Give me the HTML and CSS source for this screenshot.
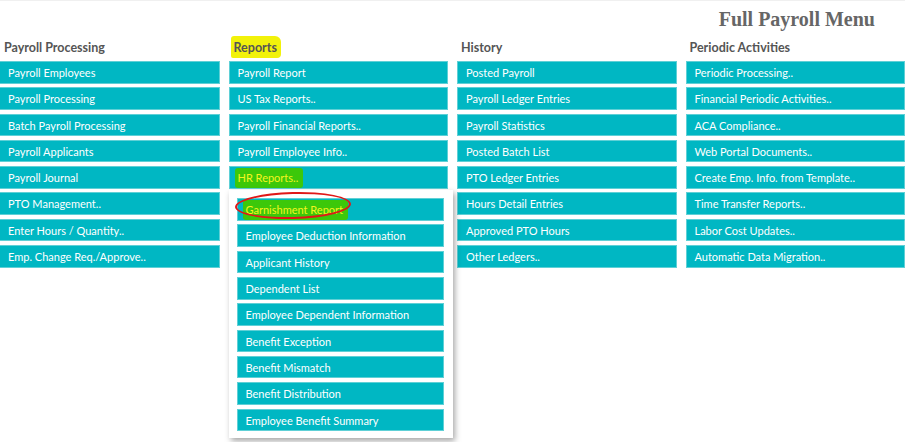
FILE: index.html
```html
<!DOCTYPE html>
<html lang="en">
<head>
    <meta charset="UTF-8">
    <meta name="viewport" content="width=device-width, initial-scale=1.0">
    <title>Full Payroll Menu</title>
    <link rel="stylesheet" href="styles.css">
</head>
<body>
    <div class="page-title">Full Payroll Menu</div>

    <div class="menu-grid">
        <div class="menu-group">
            <h2>Payroll Processing</h2>
            <div class="tile">Payroll Employees</div>
            <div class="tile">Payroll Processing</div>
            <div class="tile">Batch Payroll Processing</div>
            <div class="tile">Payroll Applicants</div>
            <div class="tile">Payroll Journal</div>
            <div class="tile">PTO Management..</div>
            <div class="tile">Enter Hours / Quantity..</div>
            <div class="tile">Emp. Change Req./Approve..</div>
        </div>

        <div class="menu-group">
            <h2><span class="mark-yellow">Reports</span></h2>
            <div class="tile">Payroll Report</div>
            <div class="tile">US Tax Reports..</div>
            <div class="tile">Payroll Financial Reports..</div>
            <div class="tile">Payroll Employee Info..</div>
            <div class="tile has-submenu">
                <span class="mark-green">HR Reports..</span>
                <!-- submenu opened from HR Reports -->
                <div class="submenu">
                    <div class="tile">
                        <span class="mark-green">Garnishment Report</span>
                        <span class="circled"></span>
                    </div>
                    <div class="tile">Employee Deduction Information</div>
                    <div class="tile">Applicant History</div>
                    <div class="tile">Dependent List</div>
                    <div class="tile">Employee Dependent Information</div>
                    <div class="tile">Benefit Exception</div>
                    <div class="tile">Benefit Mismatch</div>
                    <div class="tile">Benefit Distribution</div>
                    <div class="tile">Employee Benefit Summary</div>
                </div>
            </div>
        </div>

        <div class="menu-group">
            <h2>History</h2>
            <div class="tile">Posted Payroll</div>
            <div class="tile">Payroll Ledger Entries</div>
            <div class="tile">Payroll Statistics</div>
            <div class="tile">Posted Batch List</div>
            <div class="tile">PTO Ledger Entries</div>
            <div class="tile">Hours Detail Entries</div>
            <div class="tile">Approved PTO Hours</div>
            <div class="tile">Other Ledgers..</div>
        </div>

        <div class="menu-group">
            <h2>Periodic Activities</h2>
            <div class="tile">Periodic Processing..</div>
            <div class="tile">Financial Periodic Activities..</div>
            <div class="tile">ACA Compliance..</div>
            <div class="tile">Web Portal Documents..</div>
            <div class="tile">Create Emp. Info. from Template..</div>
            <div class="tile">Time Transfer Reports..</div>
            <div class="tile">Labor Cost Updates..</div>
            <div class="tile">Automatic Data Migration..</div>
        </div>
    </div>
</body>
</html>
```

FILE: styles.css
```css
body {
    margin: 0;
    background-color: white;
    font-family: "Segoe UI", Lato, "Open Sans", sans-serif;
    border-top: 1px solid #f0f0f0;
    height: 441px;
    overflow: hidden;
}
.page-title {
    font-family: "Liberation Serif", serif;
    font-weight: bold;
    font-size: 20px;
    color: #666;
    text-align: right;
    padding: 7px 30px 0 0;
    height: 29px;
}
.menu-grid {
    display: grid;
    grid-template-columns: repeat(4, 1fr);
    column-gap: 9px;
}
.menu-group h2 {
    font-size: 12.5px;
    font-weight: bold;
    color: #555;
    margin: 0 0 3px 0;
    padding-left: 4px;
    height: 21px;
    line-height: 21px;
}
.tile {
    position: relative;
    background-color: #00b7c3;
    color: white;
    font-size: 11px;
    height: 22.5px;
    line-height: 21px;
    margin-bottom: 3.8px;
    padding-left: 8px;
    box-sizing: border-box;
    border: 1px solid #5fd0d6;
    border-left-width: 0;
    white-space: nowrap;
}
.menu-group:not(:first-child) .tile {
    border-left-width: 1px;
}

/* marker highlights */
.mark-yellow {
    background-color: #f2f20a;
    padding: 4px 4px 3px 3px;
    margin-left: -2px;
    border-radius: 3px 6px 4px 2px;
}
.mark-green {
    background-color: #3cc80a;
    color: #f4f520;
    padding: 3px 5px 4px 3px;
    margin-left: -3px;
    border-radius: 3px;
}

/* HR Reports dropdown */
.submenu {
    position: absolute;
    top: 23px;
    left: -1px;
    width: 224px;
    background-color: white;
    padding: 8px 9px 3px 8px;
    box-sizing: border-box;
    box-shadow: 2px 3px 6px rgba(0, 0, 0, 0.35);
    z-index: 2;
}
.submenu .tile {
    border-left-width: 1px;
}
.circled {
    position: absolute;
    left: -3px;
    top: -7px;
    width: 116px;
    height: 27px;
    border: 2px solid #e01818;
    border-radius: 50%;
    box-sizing: border-box;
    transform: rotate(-1.5deg);
}
```
